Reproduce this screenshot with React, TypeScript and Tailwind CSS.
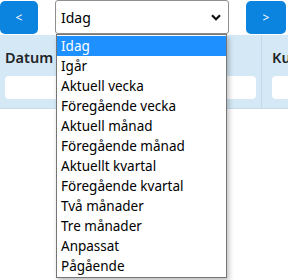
const periods = [
  'Idag',
  'Igår',
  'Aktuell vecka',
  'Föregående vecka',
  'Aktuell månad',
  'Föregående månad',
  'Aktuellt kvartal',
  'Föregående kvartal',
  'Två månader',
  'Tre månader',
  'Anpassat',
  'Pågående',
]

function Chevron() {
  return (
    <svg width="10" height="7" viewBox="0 0 10 7" className="mt-px">
      <path d="M1 1.2 5 5.2 9 1.2" fill="none" stroke="#111" strokeWidth="2.2" />
    </svg>
  )
}

export default function App() {
  return (
    <div className="relative h-[280px] w-[288px] overflow-hidden bg-white font-['Noto_Sans',sans-serif] text-[#212529]">
      {/* period navigation */}
      <div className="flex h-[35px] items-start">
        <button className="mt-px h-[33px] w-[38px] shrink-0 rounded-[5px] bg-[#0b84e0] text-[12px] text-white">&lt;</button>
        <div className="ml-[17px] flex h-[34px] w-[174px] shrink-0 items-center justify-between rounded-[3px] border border-[#8f8f8f] pl-[5px] pr-[7px] text-[14px] text-black">
          <span>Idag</span>
          <Chevron />
        </div>
        <button className="ml-[17px] mt-px h-[33px] w-[40px] shrink-0 rounded-[5px] bg-[#0b84e0] text-[12px] text-white">&gt;</button>
      </div>

      {/* table header with filters */}
      <div className="flex h-[74px] border-b border-[#c9dcea] bg-[#d5e8f6]">
        <div className="w-[262px] shrink-0 border-r border-[#c3d8e9] px-[5px] pt-[12px]">
          <div className="whitespace-nowrap text-[14.5px] font-semibold leading-[20px]">Datum till</div>
          <div className="mt-[9px] h-[23px] rounded-[4px] bg-white" />
        </div>
        <div className="min-w-0 flex-1 overflow-hidden pl-[10px] pt-[12px]">
          <div className="whitespace-nowrap text-[14.5px] font-semibold leading-[20px]">Kund</div>
          <div className="mt-[9px] h-[23px] w-[60px] rounded-[4px] bg-white" />
        </div>
      </div>

      {/* open select list */}
      <ul className="absolute left-[56px] top-[34px] w-[171px] border border-[#767676] bg-white py-px text-[13.5px] leading-[20px] text-black shadow-[2px_3px_5px_rgba(0,0,0,0.25)]">
        {periods.map((p, i) => (
          <li
            key={p}
            className={i === 0 ? 'h-[20px] bg-[#1e90ff] pl-[4px] text-white' : 'h-[20px] pl-[4px]'}
          >
            {p}
          </li>
        ))}
      </ul>
    </div>
  )
}
